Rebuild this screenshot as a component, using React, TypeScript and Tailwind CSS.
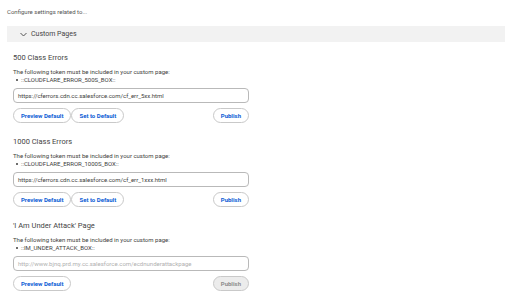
type Section = {
  title: string;
  token: string;
  url: string;
  placeholder?: boolean;
  showSetDefault: boolean;
  publishDisabled: boolean;
};

const sections: Section[] = [
  {
    title: "500 Class Errors",
    token: "::CLOUDFLARE_ERROR_500S_BOX::",
    url: "https://cferrors.cdn.cc.salesforce.com/cf_err_5xx.html",
    showSetDefault: true,
    publishDisabled: false,
  },
  {
    title: "1000 Class Errors",
    token: "::CLOUDFLARE_ERROR_1000S_BOX::",
    url: "https://cferrors.cdn.cc.salesforce.com/cf_err_1xxx.html",
    showSetDefault: true,
    publishDisabled: false,
  },
  {
    title: "'I Am Under Attack' Page",
    token: "::IM_UNDER_ATTACK_BOX::",
    url: "http://www.bjnq.prd.my.cc.salesforce.com/ecdnunderattackpage",
    placeholder: true,
    showSetDefault: false,
    publishDisabled: true,
  },
];

const PillButton = ({ label, disabled }: { label: string; disabled?: boolean }) => (
  <button
    className={
      disabled
        ? "h-[15px] px-[7px] rounded-full border border-[#c9c9c9] bg-[#ececec] text-[6px] font-bold text-[#8c8c8c] leading-none"
        : "h-[15px] px-[7px] rounded-full border border-[#c9c9c9] bg-white text-[6px] font-bold text-[#0b5cd5] leading-none"
    }
  >
    {label}
  </button>
);

export default function App() {
  return (
    <div
      className="w-[512px] h-[305px] bg-white text-[#3e3e3c] overflow-hidden"
      style={{ fontFamily: "Roboto, 'Liberation Sans', sans-serif" }}
    >
      <div className="pt-[8px] pl-[7px] text-[6px] leading-[8px] text-[#555]">Configure settings related to...</div>

      {/* セクションヘッダー */}
      <div className="mt-[10px] ml-[7px] w-[498px] h-[16px] bg-[#f2f2f2] flex items-center">
        <svg className="ml-[13px]" width="7" height="5" viewBox="0 0 7 5">
          <polyline points="0.5,1 3.5,4 6.5,1" fill="none" stroke="#555" strokeWidth="1" />
        </svg>
        <span className="ml-[4px] text-[7px] text-[#444]">Custom Pages</span>
      </div>

      <div className="pl-[13px] w-[250px]">
        {sections.map((s, i) => (
          <div key={i} className={i === 0 ? "mt-[11px]" : "mt-[14px]"}>
            <div className="text-[7.5px] leading-[10px] text-[#444]">{s.title}</div>
            <div className="mt-[5px] text-[6px] leading-[8px] text-[#3e3e3c]">
              The following token must be included in your custom page:
            </div>
            <div className="flex items-center text-[6px] leading-[8px] text-[#3e3e3c]">
              <span className="ml-[3px] mr-[3px] w-[2px] h-[2px] rounded-full bg-[#3e3e3c]" />
              {s.token}
            </div>
            <div className="mt-[4px] h-[15px] w-[236px] rounded-[4px] border border-[#b9b9b9] flex items-center px-[4px]">
              <span className={s.placeholder ? "text-[6px] text-[#b0b0b0]" : "text-[6px] text-[#3e3e3c]"}>
                {s.url}
              </span>
            </div>
            <div className="mt-[5px] w-[236px] flex items-center">
              <PillButton label="Preview Default" />
              {s.showSetDefault && <PillButton label="Set to Default" />}
              <div className="flex-1" />
              <PillButton label="Publish" disabled={s.publishDisabled} />
            </div>
          </div>
        ))}
      </div>
    </div>
  );
}
